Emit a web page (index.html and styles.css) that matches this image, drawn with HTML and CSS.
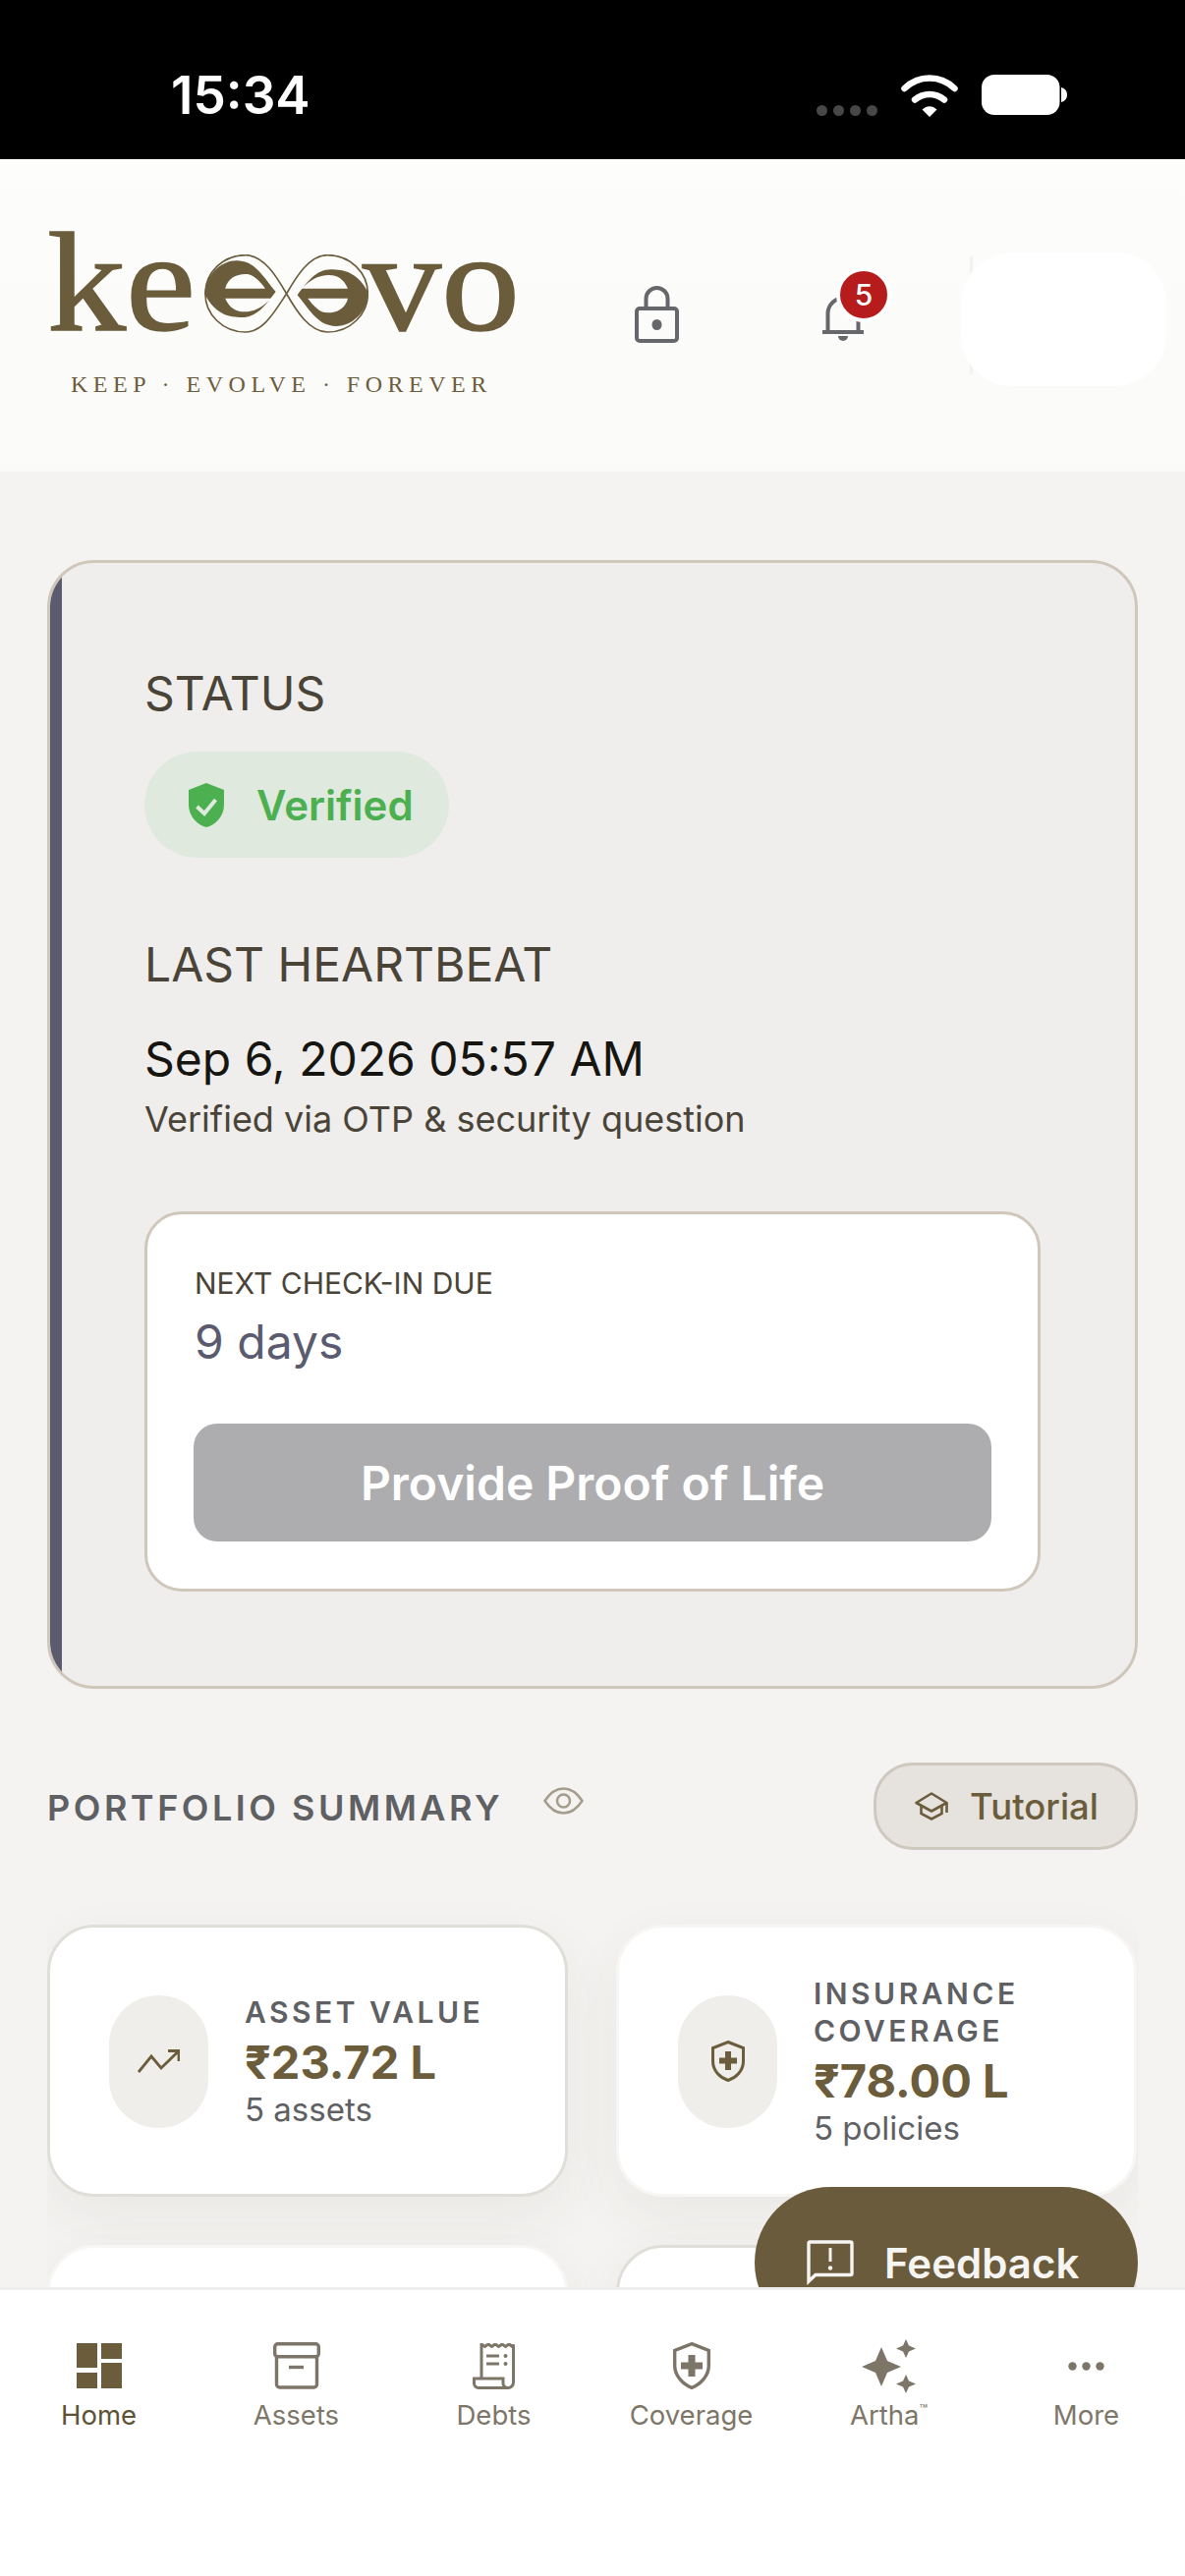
FILE: index.html

```html
<!DOCTYPE html>
<html lang="en">
<head>
    <meta charset="UTF-8">
    <meta name="viewport" content="width=device-width, initial-scale=1.0">
    <title>Keeevo Home</title>
    <link rel="stylesheet" href="styles.css">
</head>
<body>
    <div class="app">
        <div class="status-bar">
            <span class="clock">15:34</span>
            <div class="status-icons">
                <div class="signal"><i></i><i></i><i></i><i></i></div>
                <svg class="wifi" width="58" height="43" viewBox="0 0 58 43">
                    <path d="M3.5 14 C18 0 40 0 54.5 14" fill="none" stroke="#fff" stroke-width="6.5" stroke-linecap="round"/>
                    <path d="M14 25.5 C23 18 35 18 44 25.5" fill="none" stroke="#fff" stroke-width="6.5" stroke-linecap="round"/>
                    <path d="M29 43 L21.5 35.5 C26 31 32 31 36.5 35.5 Z" fill="#fff"/>
                </svg>
                <svg class="battery" width="87" height="41" viewBox="0 0 87 41">
                    <rect x="0" y="0" width="79.5" height="41" rx="13" fill="#fff"/>
                    <path d="M81 13 C85 14 87 17 87 20.5 C87 24 85 27 81 28 Z" fill="#fff"/>
                </svg>
            </div>
        </div>

        <header class="top-bar">
            <div class="logo">
                <div class="logo-word">
                    <span>ke</span>
                    <svg class="logo-mark" width="149" height="80" viewBox="565 148 500 240" preserveAspectRatio="none">
                        <path d="M815 268 C780 320 745 385 690 385 C620 385 567 330 567 268 C567 205 620 150 690 150 C745 150 785 215 815 268 C845 320 885 385 940 385 C1010 385 1063 330 1063 268 C1063 205 1010 150 940 150 C885 150 845 215 815 268 Z" fill="none" stroke="#6b5c3c" stroke-width="5"/>
                        <g id="loop">
                            <path d="M565 268 C570 205 620 165 665 167 C718 169 738 208 782 262 C752 302 725 340 680 340 C640 340 598 332 565 268 Z" fill="#6b5c3c"/>
                            <path d="M628 252 C635 222 660 208 690 208 C715 208 733 230 750 252 Z" fill="#fcfcfa"/>
                            <path d="M628 282 L770 282 C740 308 720 323 685 323 C660 323 640 310 628 282 Z" fill="#fcfcfa"/>
                        </g>
                        <use href="#loop" transform="rotate(180 815 267)"/>
                    </svg>
                    <span>vo</span>
                </div>
                <div class="logo-tag">KEEP · EVOLVE · FOREVER</div>
            </div>
            <svg class="lock" width="45" height="58" viewBox="0 0 45 58">
                <rect x="2" y="23" width="41" height="33" rx="3" fill="none" stroke="#66676b" stroke-width="4"/>
                <path d="M11.5 23 V13 a11 11 0 0 1 22 0 V23" fill="none" stroke="#66676b" stroke-width="4"/>
                <ellipse cx="22.5" cy="39.5" rx="5" ry="5.5" fill="#66676b"/>
            </svg>
            <div class="bell">
                <svg width="42" height="52" viewBox="0 0 42 52">
                    <path d="M5.5 41 V24 a15.5 15.5 0 0 1 31 0 V41" fill="none" stroke="#66676b" stroke-width="4"/>
                    <path d="M0 43 H42" stroke="#66676b" stroke-width="4"/>
                    <path d="M16 47 h10 a5 5 0 0 1 -10 0 Z" fill="#66676b"/>
                </svg>
                <span class="badge">5</span>
            </div>
            <div class="avatar"></div>
        </header>

        <main class="content">
            <section class="status-card">
                <div class="status-edge"></div>
                <div class="status-body">
                    <div class="section-label">STATUS</div>
                    <div class="verified">
                        <svg width="36" height="45" viewBox="0 0 36 45">
                            <path d="M18 0 L36 7 V22 C36 34 27 43 18 45 C9 43 0 34 0 22 V7 Z" fill="#4caf50"/>
                            <path d="M8.5 24 L16 31 L27.5 17" fill="none" stroke="#dfe9de" stroke-width="4"/>
                        </svg>
                        <span>Verified</span>
                    </div>
                    <div class="section-label heartbeat">LAST HEARTBEAT</div>
                    <div class="beat-date">Sep 6, 2026 05:57 AM</div>
                    <div class="beat-note">Verified via OTP &amp; security question</div>
                    <div class="checkin">
                        <div class="checkin-label">NEXT CHECK-IN DUE</div>
                        <div class="checkin-days">9 days</div>
                        <button class="proof-btn">Provide Proof of Life</button>
                    </div>
                </div>
            </section>

            <div class="summary-head">
                <div class="summary-title">
                    <span>PORTFOLIO SUMMARY</span>
                    <svg width="41" height="28" viewBox="0 0 41 28">
                        <path d="M1.5 14 C8 4 14 1.5 20.5 1.5 C27 1.5 33 4 39.5 14 C33 24 27 26.5 20.5 26.5 C14 26.5 8 24 1.5 14 Z" fill="none" stroke="#a49d8c" stroke-width="2.5"/>
                        <circle cx="20.5" cy="14" r="6.5" fill="none" stroke="#a49d8c" stroke-width="2.5"/>
                    </svg>
                </div>
                <button class="tutorial-btn">
                    <svg width="34" height="29" viewBox="0 0 34 29">
                        <path d="M17 1.5 L32.5 11 L17 19.5 L1.5 11 Z" fill="none" stroke="#6b5c3c" stroke-width="2.6" stroke-linejoin="round"/>
                        <path d="M6.5 14 V22 L17 27.5 L27.5 22 V14 M32.5 11 V21" fill="none" stroke="#6b5c3c" stroke-width="2.6"/>
                    </svg>
                    <span>Tutorial</span>
                </button>
            </div>

            <div class="summary-wrap">
                <div class="summary-grid">
                    <div class="stat-card">
                        <div class="stat-icon">
                            <svg width="43" height="24" viewBox="0 0 43 24">
                                <path d="M1 23 L14 7 L24 19 L42 1.5 M31 1.5 H42 V12" fill="none" stroke="#6b5c3c" stroke-width="2.8"/>
                            </svg>
                        </div>
                        <div class="stat-text">
                            <div class="stat-label">ASSET VALUE</div>
                            <div class="stat-value">₹23.72 L</div>
                            <div class="stat-sub">5 assets</div>
                        </div>
                    </div>
                    <div class="stat-card stat-card-light">
                        <div class="stat-icon">
                            <svg width="34" height="42" viewBox="0 0 34 42">
                                <path d="M17 1.5 L32.5 7.5 V21 C32.5 31 25 38 17 40.5 C9 38 1.5 31 1.5 21 V7.5 Z" fill="none" stroke="#6b5c3c" stroke-width="3"/>
                                <path d="M14 11 H20 V17.5 H26 V23.5 H20 V30 H14 V23.5 H8 V17.5 H14 Z" fill="#6b5c3c"/>
                            </svg>
                        </div>
                        <div class="stat-text">
                            <div class="stat-label">INSURANCE COVERAGE</div>
                            <div class="stat-value">₹78.00 L</div>
                            <div class="stat-sub">5 policies</div>
                        </div>
                    </div>
                    <div class="stat-card stat-card-light"></div>
                    <div class="stat-card"></div>
                </div>
            </div>

            <button class="feedback-btn">
                <svg width="48" height="46" viewBox="0 0 48 46">
                    <path d="M2 42 V3.5 a1.5 1.5 0 0 1 1.5 -1.5 H44.5 a1.5 1.5 0 0 1 1.5 1.5 V34 a1.5 1.5 0 0 1 -1.5 1.5 H9 Z" fill="none" stroke="#f6f5f2" stroke-width="3.4"/>
                    <path d="M24 8 V22" stroke="#f6f5f2" stroke-width="3"/>
                    <circle cx="24" cy="28.5" r="2.2" fill="#f6f5f2"/>
                </svg>
                <span>Feedback</span>
            </button>
        </main>

        <nav class="tab-bar">
            <div class="tab tab-active">
                <div class="tab-icon">
                    <svg width="46" height="46" viewBox="0 0 46 46">
                        <path d="M0 0 H21 V25 H0 Z M25 0 H46 V16 H25 Z M0 30 H21 V46 H0 Z M25 20 H46 V46 H25 Z" fill="#6b5c3c"/>
                    </svg>
                </div>
                <span>Home</span>
            </div>
            <div class="tab">
                <div class="tab-icon">
                    <svg width="48" height="48" viewBox="0 0 48 48">
                        <rect x="1.7" y="1.7" width="44.6" height="13" rx="3" fill="none" stroke="#7d7668" stroke-width="3.4"/>
                        <path d="M3.5 15 V43 a3 3 0 0 0 3 3 H41.5 a3 3 0 0 0 3 -3 V15" fill="none" stroke="#7d7668" stroke-width="3.4"/>
                        <path d="M16 25.5 H31" stroke="#7d7668" stroke-width="3.4"/>
                    </svg>
                </div>
                <span>Assets</span>
            </div>
            <div class="tab">
                <div class="tab-icon">
                    <svg width="43" height="47" viewBox="0 0 43 47">
                        <path d="M9 36 V1 L12.5 3.5 L16 1 L19.5 3.5 L23 1 L26.5 3.5 L30 1 L33.5 3.5 L37 1 L40.5 3.5 L41.5 1.5 V40 a5.5 5.5 0 0 1 -5.5 5.5 H6 a4.5 4.5 0 0 1 -4.5 -4.5 V36 H31 V41 a4.5 4.5 0 0 0 4.5 4.5" fill="none" stroke="#7d7668" stroke-width="3"/>
                        <path d="M14 13 H27 M14 21 H27" stroke="#7d7668" stroke-width="3.2"/>
                        <circle cx="33.5" cy="13" r="2" fill="#7d7668"/>
                        <circle cx="33.5" cy="21" r="2" fill="#7d7668"/>
                    </svg>
                </div>
                <span>Debts</span>
            </div>
            <div class="tab">
                <div class="tab-icon">
                    <svg width="38" height="48" viewBox="0 0 38 48">
                        <path d="M19 1.7 L36.3 8.5 V24 C36.3 34 28 43 19 46.3 C10 43 1.7 34 1.7 24 V8.5 Z" fill="none" stroke="#7d7668" stroke-width="3.4"/>
                        <path d="M15.5 13 H22.5 V20.5 H30 V27.5 H22.5 V35 H15.5 V27.5 H8 V20.5 H15.5 Z" fill="#7d7668"/>
                    </svg>
                </div>
                <span>Coverage</span>
            </div>
            <div class="tab">
                <div class="tab-icon">
                    <svg width="55" height="55" viewBox="0 0 55 55">
                        <path d="M20 8 L26 22 L40 28 L26 34 L20 48 L14 34 L0 28 L14 22 Z" fill="#7d7668"/>
                        <path d="M45 0 L48 6.5 L55 9.5 L48 12.5 L45 19 L42 12.5 L35 9.5 L42 6.5 Z" fill="#7d7668"/>
                        <path d="M45 36 L48 42.5 L55 45.5 L48 48.5 L45 55 L42 48.5 L35 45.5 L42 42.5 Z" fill="#7d7668"/>
                    </svg>
                </div>
                <span>Artha<sup>™</sup></span>
            </div>
            <div class="tab">
                <div class="tab-icon">
                    <svg width="37" height="9" viewBox="0 0 37 9">
                        <circle cx="4.5" cy="4.5" r="4.2" fill="#7d7668"/>
                        <circle cx="18.5" cy="4.5" r="4.2" fill="#7d7668"/>
                        <circle cx="32.5" cy="4.5" r="4.2" fill="#7d7668"/>
                    </svg>
                </div>
                <span>More</span>
            </div>
        </nav>
    </div>
</body>
</html>
```

FILE: styles.css

```css
* {
    box-sizing: border-box;
}
body {
    margin: 0;
    font-family: Inter, "Noto Sans", sans-serif;
    background-color: #f4f3f1;
}
button {
    font-family: inherit;
    border: none;
}
svg {
    display: block;
}
.app {
    width: 1206px;
    height: 2622px;
    display: flex;
    flex-direction: column;
    overflow: hidden;
}

/* phone status bar */
.status-bar {
    height: 162px;
    flex-shrink: 0;
    background-color: #000;
    display: flex;
    justify-content: space-between;
    align-items: flex-start;
    padding: 67px 120px 0 174px;
}
.clock {
    color: #fff;
    font-size: 53px;
    font-weight: 600;
    line-height: 60px;
}
.status-icons {
    display: flex;
    align-items: flex-start;
    gap: 24px;
    margin-top: 9px;
}
.signal {
    display: flex;
    gap: 6px;
    margin-top: 31px;
}
.signal i {
    width: 11px;
    height: 11px;
    border-radius: 50%;
    background-color: #474747;
}

/* app header */
.top-bar {
    height: 318px;
    flex-shrink: 0;
    background: linear-gradient(#fdfdfb, #fafaf8);
    display: flex;
    align-items: flex-start;
    padding-left: 48px;
    isolation: isolate;
}
.logo {
    width: 500px;
    color: #6b5c3c;
    font-family: "Liberation Serif", serif;
}
.logo-word {
    display: flex;
    align-items: flex-end;
    height: 190px;
    margin-top: 31px;
    font-size: 143px;
    line-height: 190px;
    -webkit-text-stroke: 1.5px #6b5c3c;
    transform: scaleX(1.12);
    transform-origin: left;
}
.logo-mark {
    margin: 0 -5.4px 44px 8px;
    flex-shrink: 0;
}
.logo-tag {
    margin: -7px 0 0 24px;
    font-size: 24px;
    line-height: 30px;
    letter-spacing: 5.5px;
    white-space: nowrap;
}
.lock {
    margin: 129px 0 0 98px;
}
.bell {
    position: relative;
    margin: 133px 0 0 146px;
}
.badge {
    position: absolute;
    left: 14px;
    top: -23px;
    width: 56px;
    height: 56px;
    border: 4px solid #fff;
    border-radius: 50%;
    background-color: #b71c1c;
    color: #fff;
    font-size: 30px;
    font-weight: 500;
    line-height: 48px;
    text-align: center;
}
.avatar {
    position: relative;
    width: 209px;
    height: 136px;
    margin: 95px 0 0 99px;
    border-radius: 52px;
    background-color: #fff;
}
.avatar::before {
    content: "";
    position: absolute;
    left: 9px;
    top: 4px;
    width: 3px;
    height: 120px;
    background-color: #f4f1ee;
    z-index: -1;
}

/* scroll area */
.content {
    position: relative;
    flex: 1;
    min-height: 0;
    overflow: hidden;
    padding: 90px 48px 0 48px;
}
.status-card {
    display: flex;
    border: 3px solid #d0c7bb;
    border-radius: 48px;
    background-color: #efeeec;
    overflow: hidden;
}
.status-edge {
    width: 12px;
    flex-shrink: 0;
    background-color: #5b5b70;
}
.status-body {
    flex: 1;
    padding: 105px 96px 96px 84px;
}
.section-label {
    font-size: 48px;
    line-height: 56px;
    color: #4a4438;
}
.verified {
    display: inline-flex;
    align-items: center;
    gap: 33px;
    height: 108px;
    margin-top: 31px;
    padding: 0 36px 0 45px;
    border-radius: 54px;
    background-color: #dfe9de;
    color: #4caf50;
    font-size: 42px;
    font-weight: 600;
    vertical-align: top;
}
.heartbeat {
    margin-top: 81px;
}
.beat-date {
    margin-top: 37px;
    font-size: 48px;
    line-height: 62px;
    color: #16150f;
}
.beat-note {
    margin-top: 7px;
    font-size: 36px;
    line-height: 46px;
    color: #4a4438;
}
.checkin {
    margin-top: 71px;
    padding: 50px 47px 48px;
    border: 3px solid #d0c7bb;
    border-radius: 38px;
    background-color: #fff;
}
.checkin-label {
    margin-left: 1px;
    font-size: 30px;
    line-height: 40px;
    color: #4a4438;
}
.checkin-days {
    margin: 10px 0 0 1px;
    font-size: 48px;
    line-height: 60px;
    color: #5b5b70;
}
.proof-btn {
    display: block;
    width: 100%;
    height: 120px;
    margin-top: 53px;
    border-radius: 24px;
    background-color: #adadaf;
    color: #fff;
    font-size: 48px;
    font-weight: 600;
}

/* portfolio summary */
.summary-head {
    display: flex;
    justify-content: space-between;
    align-items: center;
    margin-top: 75px;
}
.summary-title {
    display: flex;
    align-items: center;
    gap: 41px;
    padding-top: 2px;
    color: #5f6064;
    font-size: 36px;
    font-weight: 600;
    line-height: 50px;
    letter-spacing: 3.5px;
}
.summary-title svg {
    margin-bottom: 14px;
}
.tutorial-btn {
    display: flex;
    align-items: center;
    gap: 22px;
    height: 89px;
    padding: 0 37px 0 39px;
    border: 3px solid #cec8bf;
    border-radius: 40px;
    background-color: #e6e3de;
    color: #6b5c3c;
    font-size: 36.5px;
    font-weight: 500;
}
.summary-wrap {
    margin-top: 76px;
    overflow-x: clip;
}
.summary-grid {
    display: grid;
    grid-template-columns: 530px 530px;
    gap: 49px;
}
.stat-card {
    display: flex;
    align-items: center;
    gap: 37px;
    height: 277px;
    padding: 0 20px 4px 60px;
    border: 3px solid #e0ded8;
    border-radius: 48px;
    background-color: #fff;
    box-shadow: 0 20px 60px rgba(80, 70, 50, 0.06);
}
.stat-card-light {
    border-color: #f7f6f4;
}
.stat-icon {
    width: 101px;
    height: 135px;
    flex-shrink: 0;
    display: flex;
    justify-content: center;
    align-items: center;
    margin-top: 6px;
    border-radius: 50px;
    background-color: #efeeeb;
}
.stat-icon svg {
    margin-bottom: 2px;
}
.stat-label {
    font-size: 30px;
    font-weight: 600;
    line-height: 38px;
    letter-spacing: 3.5px;
    color: #5f6064;
}
.stat-value {
    font-size: 47px;
    font-weight: 700;
    line-height: 64px;
    color: #6b5c3c;
}
.stat-sub {
    font-size: 33px;
    line-height: 32px;
    color: #5f6064;
}
.feedback-btn {
    position: absolute;
    left: 768px;
    top: 1746px;
    width: 390px;
    height: 154px;
    display: flex;
    align-items: center;
    gap: 31px;
    padding: 0 0 0 53px;
    border-radius: 77px;
    background-color: #6a5b3c;
    color: #f6f5f2;
    font-size: 42px;
    font-weight: 600;
}

/* bottom tabs */
.tab-bar {
    position: relative;
    height: 294px;
    flex-shrink: 0;
    display: flex;
    border-top: 3px solid #efeeec;
    background-color: #fff;
}
.tab {
    flex: 1;
    display: flex;
    flex-direction: column;
    align-items: center;
    padding-top: 50px;
    color: #7d7668;
    font-size: 27.5px;
    line-height: 36px;
}
.tab-active {
    color: #5e5235;
}
.tab-icon {
    height: 54px;
    margin-bottom: 5px;
    display: flex;
    align-items: center;
}
.tab sup {
    font-size: 14px;
    line-height: 0;
}
```
